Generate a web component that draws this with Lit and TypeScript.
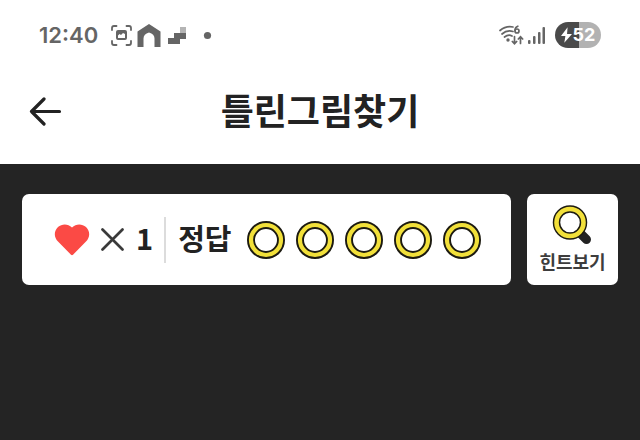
import { LitElement, html, css } from "lit";
import { customElement, property } from "lit/decorators.js";

@customElement("status-bar")
class StatusBar extends LitElement {
  static styles = css`
    :host {
      display: flex;
      justify-content: space-between;
      align-items: center;
      height: 26px;
      padding: 22px 39px 10px;
      color: #656565;
      font-family: "Inter", sans-serif;
    }
    .group {
      display: flex;
      align-items: center;
    }
    .clock {
      width: 72px;
      font-size: 22px;
      line-height: 26px;
      font-weight: 600;
    }
    svg {
      display: block;
    }
    .battery {
      display: flex;
      align-items: center;
      justify-content: center;
      gap: 1px;
      width: 46px;
      height: 26px;
      margin-left: 9px;
      border-radius: 13px;
      background: linear-gradient(to right, #4a4a4a 52%, #b2b2b2 52%);
      color: #fff;
      font-size: 18px;
      line-height: 26px;
      font-weight: 700;
    }
  `;

  render() {
    return html`
      <div class="group">
        <time class="clock">12:40</time>
        <svg width="102" height="26" viewBox="0 0 102 26" aria-hidden="true">
          <g fill="none" stroke="#656565" stroke-width="1.800" stroke-linecap="round">
            <path d="M1 8V6Q1 4 3 4H5.500M15.500 4H18Q20 4 20 6V8M20 19V21Q20 23 18 23H15.500M5.500 23H3Q1 23 1 21V19" />
          </g>
          <path fill="#656565" fill-rule="evenodd" d="M7 8H14Q16 8 16 10V16Q16 18 14 18H7Q5 18 5 16V10Q5 8 7 8ZM7 16H14V12L12 11L10 13L8.500 12L7 13.500Z" />
          <path fill="#656565" d="M38 2L49.500 9.500V25H43.500V16.500Q43.500 12 38 10.500Q32.500 12 32.500 16.500V25H26.500V9.500Z" />
          <path fill="#656565" d="M69 11H75V17H69V22H57V16H63V11Z" />
          <path fill="#b4b4b4" d="M69 5H75V11H69Z" />
          <circle cx="96.500" cy="13.500" r="3.600" fill="#656565" />
        </svg>
      </div>
      <div class="group">
        <svg width="48" height="26" viewBox="0 0 48 26" aria-hidden="true">
          <g fill="none" stroke="#656565" stroke-width="1.700" stroke-linecap="round">
            <path d="M2 8.500Q8 3.500 15 5M4 12Q9 7.500 15 9.500M6.500 15Q10.500 12 14 14" />
            <path d="M16.500 14.500V21.500M14.300 19.500L16.500 21.700L18.700 19.500M22.500 21.500V15M20.300 17L22.500 14.800L24.700 17" />
            <path d="M19.800 4.200Q17 5 17 8.500" />
            <circle cx="19" cy="9" r="2" />
          </g>
          <circle cx="10" cy="18" r="1.700" fill="#656565" />
          <g fill="#656565">
            <rect x="30" y="18" width="2.500" height="4" rx="1" />
            <rect x="35" y="14" width="2.500" height="8" rx="1" />
            <rect x="40" y="10" width="2.500" height="12" rx="1" />
            <rect x="44.500" y="5" width="2.500" height="17" rx="1" />
          </g>
        </svg>
        <div class="battery">
          <svg width="11" height="16" viewBox="0 0 10 14" aria-hidden="true">
            <path fill="#fff" d="M6 0L0 8H4L3 14L10 6H5.500Z" />
          </svg>
          <span>52</span>
        </div>
      </div>
    `;
  }
}

@customElement("score-board")
class ScoreBoard extends LitElement {
  @property({ type: Number }) lives = 1;
  @property({ type: Number }) answers = 5;

  static styles = css`
    :host {
      display: flex;
      align-items: center;
      flex: 1;
      box-sizing: border-box;
      padding: 0 30px 0 32px;
      border-radius: 7px;
      background: #fff;
      color: #222;
      font-size: 29px;
      line-height: 36px;
      font-weight: 700;
    }
    svg {
      display: block;
      flex: none;
    }
    .times {
      margin: 0 12px 0 11px;
    }
    .count,
    .label {
      padding-bottom: 6px;
    }
    .rule {
      width: 2px;
      height: 46px;
      margin: 0 12px 0 11px;
      background: #dcdcdc;
    }
    .label {
      margin-right: 15px;
      white-space: nowrap;
    }
    .rings {
      display: flex;
      flex: 1;
      justify-content: space-between;
    }
  `;

  render() {
    return html`
      <svg width="36" height="32" viewBox="0 0 36 32" role="img" aria-label="목숨">
        <path fill="#fb4a45" d="M18 3.500C22-.5 28-.5 32 3C36.500 7.500 36 13.500 32 17.500L19 30.800Q18 31.600 17 30.800L4 17.500C0 13.500-.5 7.500 4 3C8-.5 14-.5 18 3.500Z" />
      </svg>
      <svg class="times" width="23" height="23" viewBox="0 0 23 23" aria-hidden="true">
        <path d="M1.500 1.500L21.500 21.500M21.500 1.500L1.500 21.500" stroke="#3a3a3a" stroke-width="2.700" stroke-linecap="round" />
      </svg>
      <span class="count">${this.lives}</span>
      <span class="rule"></span>
      <span class="label">정답</span>
      <div class="rings">
        ${Array.from(
          { length: this.answers },
          () => html`<svg width="38" height="38" viewBox="0 0 38 38" aria-hidden="true">
            <circle cx="19" cy="19" r="15" fill="none" stroke="#1c1a10" stroke-width="8" />
            <circle cx="19" cy="19" r="15" fill="none" stroke="#f2e03a" stroke-width="4.200" />
          </svg>`
        )}
      </div>
    `;
  }
}

@customElement("app-root")
class AppRoot extends LitElement {
  static styles = css`
    :host {
      display: flex;
      flex-direction: column;
      min-height: 100vh;
      background: #242424;
      color: #222;
      font-family: "Noto Sans CJK KR", sans-serif;
    }
    .top {
      background: #fff;
    }
    .bar {
      display: grid;
      grid-template-columns: 32px 1fr 32px;
      align-items: center;
      padding: 23px 29px;
    }
    button {
      padding: 0;
      border: 0;
      background: none;
      color: inherit;
      font: inherit;
      cursor: pointer;
    }
    svg {
      display: block;
    }
    h1 {
      margin: 0;
      padding-bottom: 4px;
      text-align: center;
      font-size: 36px;
      line-height: 56px;
      font-weight: 700;
    }
    .panel {
      display: flex;
      gap: 16px;
      padding: 30px 22px;
    }
    .hint {
      display: flex;
      flex-direction: column;
      align-items: center;
      width: 91px;
      height: 91px;
      padding-top: 10px;
      border-radius: 7px;
      background: #fff;
      color: #3d3d3d;
      font-size: 18px;
      line-height: 30px;
      font-weight: 700;
      white-space: nowrap;
    }
  `;

  render() {
    return html`
      <header class="top">
        <status-bar></status-bar>
        <div class="bar">
          <button aria-label="뒤로">
            <svg width="34" height="30" viewBox="0 0 34 30">
              <path d="M15 3L2.500 15.500L15 28M2.500 15.500H30.500" fill="none" stroke="#222" stroke-width="3.200" stroke-linecap="round" stroke-linejoin="round" />
            </svg>
          </button>
          <h1>틀린그림찾기</h1>
        </div>
      </header>
      <main class="panel">
        <score-board lives="1" answers="5"></score-board>
        <button class="hint">
          <svg width="42" height="42" viewBox="0 0 42 42" aria-hidden="true">
            <path d="M29 30L34.500 35.500" stroke="#222" stroke-width="9" stroke-linecap="round" />
            <circle cx="18" cy="18.500" r="13.500" fill="#fff" stroke="#1c1a10" stroke-width="7.500" />
            <circle cx="18" cy="18.500" r="13.500" fill="none" stroke="#f2e03a" stroke-width="4.600" />
          </svg>
          <span>힌트보기</span>
        </button>
      </main>
    `;
  }
}
